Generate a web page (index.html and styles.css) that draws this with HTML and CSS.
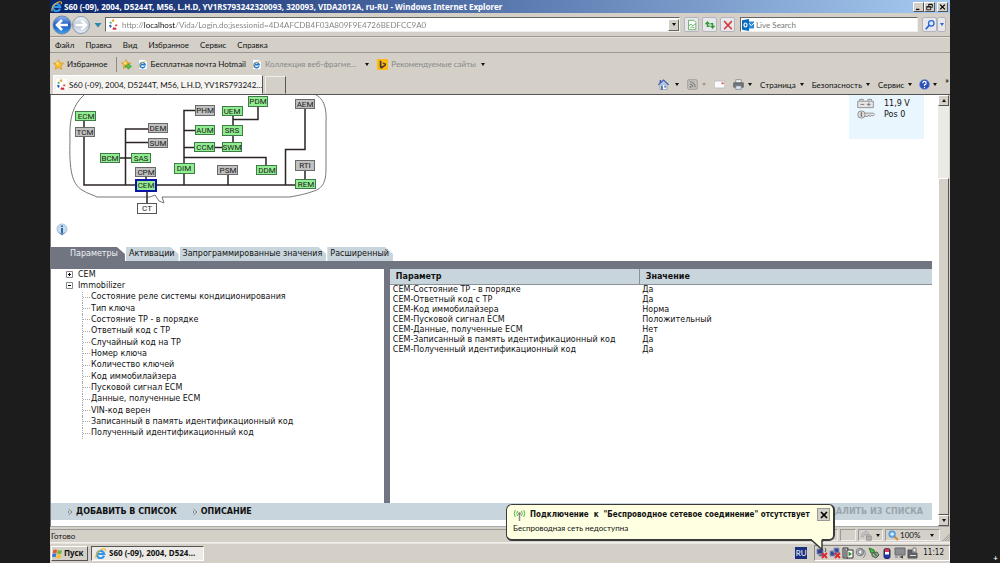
FILE: index.html
```html
<!DOCTYPE html>
<html lang="ru">
<head>
<meta charset="utf-8">
<title>S60 (-09), 2004 - VIDA</title>
<link rel="stylesheet" href="styles.css">
</head>
<body>
<svg class="defs" aria-hidden="true">
  <linearGradient id="gb" x1="0" y1="0" x2="0" y2="1"><stop offset="0" stop-color="#8fb8ee"/><stop offset=".5" stop-color="#1c58c0"/><stop offset="1" stop-color="#3fa4ee"/></linearGradient>
  <linearGradient id="gg" x1="0" y1="0" x2="0" y2="1"><stop offset="0" stop-color="#f4f6fa"/><stop offset=".5" stop-color="#bcc6d6"/><stop offset="1" stop-color="#e6edf6"/></linearGradient>
  <symbol id="ie" viewBox="0 0 16 16"><path d="M13.2 11.2A5.3 5.3 0 1 1 13.4 8.6H4.6" fill="none" stroke="#2f97ea" stroke-width="3"/><path d="M2 15C-1 12 5 2 12.500 1C16 .6 15.500 3 14.600 4.600" fill="none" stroke="#f0b428" stroke-width="1.500"/></symbol>
  <symbol id="iepage" viewBox="0 0 16 16"><path d="M2 .5h9.500l3.500 3.500v11.500H2z" fill="#fff" stroke="#b9bcc4"/><path d="M11.500 10.500A3.700 3.700 0 1 1 11.800 8.300H5" fill="none" stroke="#1f78d0" stroke-width="2.200"/><path d="M3 13C2 10 7 4 12.500 3.500" fill="none" stroke="#f0b428" stroke-width="1.200"/></symbol>
  <symbol id="vida" viewBox="0 0 16 16"><path d="M0 0h16v16H0z" fill="#fff"/><g fill="none" stroke-width="3"><path d="M9 2a6 6 0 0 0-3 1" stroke="#e8a020"/><path d="M4.500 4.500a6 6 0 0 0-1 2" stroke="#3fa860"/><path d="M3 8.500a6 6 0 0 0 1.500 3.500" stroke="#3260c8"/><path d="M7 13.500a6 6 0 0 0 5 .3" stroke="#c83040"/><path d="M12 8v2.500" stroke="#e04038"/></g></symbol>
  <symbol id="star" viewBox="0 0 16 16"><path d="M8 1l2.200 4.700 5.100.6-3.800 3.500 1 5.100L8 12.300l-4.500 2.600 1-5.100L.7 6.300l5.100-.6z" fill="#fbc02c" stroke="#d98c1c"/><path d="M8 3v6l-4-2z" fill="#ffe48a"/></symbol>
</svg>

<main class="window">
  <header class="titlebar">
    <svg class="ic"><use href="#ie"/></svg>
    <h1 class="title">S60 (-09), 2004, D5244T, M56, L.H.D, YV1RS793242320093, 320093, VIDA2012A, ru-RU - Windows Internet Explorer</h1>
    <div class="winbtns">
      <button class="wb" aria-label="Свернуть"><svg viewBox="0 0 10 10"><path d="M2 8h4" stroke="#000" stroke-width="1.600"/></svg></button>
      <button class="wb" aria-label="Восстановить"><svg viewBox="0 0 10 10"><path d="M4 4V1.500h4.500v4H7M1.500 4.500h5v4h-5z M4 2h4.500M1.500 5h5" fill="none" stroke="#000"/></svg></button>
      <button class="wb close" aria-label="Закрыть"><svg viewBox="0 0 10 10"><path d="M2 2l6 6M8 2l-6 6" stroke="#000" stroke-width="1.500"/></svg></button>
    </div>
  </header>

  <div class="navrow">
    <button class="round" aria-label="Назад"><svg viewBox="0 0 20 20"><circle cx="10" cy="10" r="9" fill="url(#gb)" stroke="#6c85a8"/><path d="M16 10H6M10 5l-5 5 5 5" fill="none" stroke="#fff" stroke-width="2.600"/></svg></button>
    <button class="round" aria-label="Вперёд"><svg viewBox="0 0 20 20"><circle cx="10" cy="10" r="8.500" fill="url(#gg)" stroke="#8d99ac"/><path d="M4.500 10h10M10.500 5.500l4.500 4.500-4.500 4.500" fill="none" stroke="#fff" stroke-width="2.400"/></svg></button>
    <button class="recent" aria-label="Последние страницы"><svg viewBox="0 0 8 6"><path d="M.5 1h7L4 5.500z" fill="#2a87b4"/></svg></button>
    <div class="field address">
      <svg class="ic"><use href="#vida"/></svg>
      <input class="url" aria-label="Адрес" value="http://localhost/Vida/Login.do;jsessionid=4D4AFCDB4F03A809F9E4726BEDFCC9A0">
      <button class="drop" aria-label="Список адресов"><i class="arr"></i></button>
    </div>
    <button class="tool" aria-label="Режим совместимости"><svg viewBox="0 0 14 14"><path d="M3 1.500h6l2.500 2.500v8.500H3z" fill="#fff" stroke="#56a858"/><path d="M3 8l3-2 2 2 3.500-2.500M5 10.500l2-1.500 3 1.500" fill="none" stroke="#56a858"/></svg></button>
    <button class="tool" aria-label="Обновить"><svg viewBox="0 0 14 14"><path d="M.8 6L4 2.300 7.200 6z" fill="#2f9a34"/><path d="M4 5v3.500h2.500" fill="none" stroke="#2f9a34" stroke-width="1.600"/><path d="M6.800 8L10 11.700 13.200 8z" fill="#2f9a34"/><path d="M10 9V5.500H7.500" fill="none" stroke="#2f9a34" stroke-width="1.600"/></svg></button>
    <button class="tool" aria-label="Остановить"><svg viewBox="0 0 14 14"><path d="M2.500 2.500l9 9.500M11.500 2.500l-9 9.500" stroke="#d2383a" stroke-width="1.800"/></svg></button>
    <div class="field search">
      <svg class="outlook" viewBox="0 0 12 12"><path d="M6 2.500h6v7H6z" fill="#2c8ad8"/><path d="M6.500 4l3 2.500L12 4" fill="none" stroke="#fff"/><path d="M0 1.200L7 0v12l-7-1.200z" fill="#0a6cbd"/><ellipse cx="3.500" cy="6" rx="1.500" ry="2" fill="none" stroke="#fff" stroke-width="1.200"/></svg>
      <input class="q" aria-label="Поиск" placeholder="Live Search">
    </div>
    <div class="go">
      <button class="tool" aria-label="Искать"><svg viewBox="0 0 14 14"><circle cx="8.500" cy="5" r="3.200" fill="#dcecff" stroke="#2f64d0" stroke-width="1.500"/><path d="M6 7.500L2 12" stroke="#2f64d0" stroke-width="2"/></svg></button>
      <button class="tool thin" aria-label="Параметры поиска"><i class="arr blue"></i></button>
    </div>
  </div>

  <nav class="menubar">
    <button>Файл</button><button>Правка</button><button>Вид</button><button>Избранное</button><button>Сервис</button><button>Справка</button>
  </nav>

  <div class="favbar">
    <button class="fav first"><svg class="ic"><use href="#star"/></svg>Избранное</button>
    <button class="fav add" aria-label="Добавить на панель избранного"><svg class="ic" viewBox="0 0 16 16"><use href="#star" width="15" height="15"/><path d="M6 9h4V6l5.500 4.800L10 15v-3H6z" fill="#56c04a" stroke="#2f8c34" stroke-width=".7"/></svg></button>
    <a class="fav hot" href="#hotmail"><svg class="ic"><use href="#iepage"/></svg>Бесплатная почта Hotmail</a>
    <button class="fav dim coll"><svg class="ic"><use href="#iepage"/></svg>Коллекция веб-фрагме...<i class="arr"></i></button>
    <button class="fav dim"><svg class="ic" viewBox="0 0 16 16"><path d="M0 0h16v16H0z" fill="#fdb813"/><path d="M4 2l2.500 1v8l5-2.700-2.800-1.300-.9-2L13 6.500v3L6.500 14 4 12.500z" fill="#40392c"/></svg>Рекомендуемые сайты<i class="arr"></i></button>
  </div>

  <div class="tabrow">
    <button class="pagetab"><svg class="ic"><use href="#vida"/></svg>S60 (-09), 2004, D5244T, M56, L.H.D, YV1RS793242...</button>
    <button class="newtab" aria-label="Новая вкладка"></button>
    <div class="cmds">
      <button class="cmd" aria-label="Домой"><svg class="ic" viewBox="0 0 16 16"><path d="M3 8h10v7.500H3z" fill="#fff" stroke="#7283a4"/><path d="M.5 8.500L8 1.500l7.500 7" fill="#b8c8e8" stroke="#4560a8" stroke-width="1.800"/><path d="M2.500 1.500h2v4h-2z" fill="#3450c0"/><path d="M4.500 9.500h2.500v6H4.500z" fill="#3a6cb8"/><path d="M9 9.500h3v3H9z" fill="#5d88c0"/></svg><i class="arr"></i></button>
      <button class="cmd" aria-label="Каналы"><svg class="ic" viewBox="0 0 16 16"><rect x="1" y="1" width="14" height="14" rx="2" fill="#c4c2be" stroke="#8d8b87"/><circle cx="5" cy="11.500" r="1.400" fill="#777"/><path d="M4 7.500a4.500 4.500 0 0 1 4.500 4.500M4 4a8 8 0 0 1 8 8" fill="none" stroke="#777" stroke-width="1.500"/></svg><i class="arr pale"></i></button>
      <button class="cmd" aria-label="Почта"><svg class="ic" viewBox="0 0 16 16"><path d="M.5 3h15v10H.5z" fill="#fcfcfc" stroke="#b5b5bb"/><path d="M11 5h3v2.500h-3z" fill="#d04848"/></svg></button>
      <button class="cmd" aria-label="Печать"><svg class="ic" viewBox="0 0 16 16"><path d="M4 1h8v5H4z" fill="#eef2f8" stroke="#777"/><path d="M1 5.500h14V12H1z" fill="#74767a" stroke="#55575c"/><path d="M4 10h8v5H4z" fill="#dceaf4" stroke="#778"/></svg><i class="arr"></i></button>
      <button class="cmd">Страница<i class="arr"></i></button>
      <button class="cmd">Безопасность<i class="arr"></i></button>
      <button class="cmd">Сервис<i class="arr"></i></button>
      <button class="cmd help" aria-label="Справка"><svg class="ic" viewBox="0 0 16 16"><circle cx="8" cy="8" r="7.300" fill="#2c52b8" stroke="#8ba0d4"/><path d="M5.500 6Q5.500 3.500 8 3.500T10.500 6Q10.500 7.500 8 8.500V10M8 11.500v1.800" fill="none" stroke="#fff" stroke-width="1.700"/></svg><i class="arr"></i></button>
      <button class="cmd more">»</button>
    </div>
  </div>

  <section class="viewport">
    <div class="doc">
      <div class="overview">
        <svg class="net" viewBox="51 95 290 128" role="img" aria-label="Схема блоков управления">
          <path d="M84 95C73 105 69 118 70 140C69 170 72 184 82 190C88 194 94 195 97 197H150L155 195L159 201L164 203L162 197H290C300 195 306 194 311 192C322 189 326 184 326 168V122C327 105 322 98 316 95" fill="none" stroke="#777"/>
          <g fill="none" stroke="#2b2323" stroke-width="1.500">
            <path d="M84 120V185H306M125.500 185V129H148M125.500 142.500H148M120 158H131M146 172V185M147 190V205M184 185V110.500H196M184 130.500H196M184 147.500H232M184 157.500H266V165M228 175V185M233 115V147M233 119.500H258V106M305 108V149.500H285.500V185M305 170V180"/>
          </g>
          <g class="g">
            <rect x="75.500" y="111.500" width="20" height="9"/><rect x="100.500" y="153.500" width="19" height="9"/><rect x="131.500" y="153.500" width="19" height="9"/><rect x="195.500" y="125.500" width="19" height="9"/><rect x="194.500" y="142.500" width="20" height="9"/><rect x="174.500" y="163.500" width="20" height="10"/><rect x="222.500" y="106.500" width="20" height="9"/><rect x="248.500" y="96.500" width="19" height="10"/><rect x="222.500" y="125.500" width="20" height="10"/><rect x="222.500" y="142.500" width="19" height="9"/><rect x="256.500" y="165.500" width="20" height="9"/><rect x="295.500" y="179.500" width="20" height="9"/>
          </g>
          <g class="n">
            <rect x="75.500" y="127.500" width="19" height="9"/><rect x="148.500" y="123.500" width="19" height="9"/><rect x="148.500" y="138.500" width="19" height="9"/><rect x="135.500" y="167.500" width="20" height="9"/><rect x="195.500" y="105.500" width="19" height="10"/><rect x="217.500" y="165.500" width="20" height="9"/><rect x="295.500" y="99.500" width="19" height="9"/><rect x="295.500" y="160.500" width="19" height="10"/>
          </g>
          <rect x="136" y="180" width="20" height="11" fill="#90ee90" stroke="#0c14a8" stroke-width="2"/>
          <rect x="137.500" y="203.500" width="19" height="10" fill="#fff" stroke="#555"/>
          <g class="lbl">
            <text x="86" y="119">ECM</text><text x="85" y="135">TCM</text><text x="158" y="131">DEM</text><text x="158" y="146">SUM</text><text x="110" y="161">BCM</text><text x="141" y="161">SAS</text><text x="146" y="175">CPM</text><text x="146" y="188">CEM</text><text x="147" y="211">CT</text><text x="205" y="113">PHM</text><text x="205" y="133">AUM</text><text x="205" y="150">CCM</text><text x="184" y="171">DIM</text><text x="228" y="173">PSM</text><text x="232" y="114">UEM</text><text x="258" y="104">PDM</text><text x="232" y="133">SRS</text><text x="232" y="150">SWM</text><text x="267" y="173">DDM</text><text x="305" y="107">AEM</text><text x="305" y="168">RTI</text><text x="306" y="187">REM</text>
          </g>
        </svg>
        <dl class="vehicle">
          <dt><svg class="vi" viewBox="0 0 20 12"><path d="M1 3.500h17v7H1zM3 3V1.500h4V3M12 3V1.500h4V3" fill="#e4e4e4" stroke="#8c8c8c"/><path d="M4 7h4M11 7h4M13 5v4" stroke="#777"/></svg></dt><dd>11,9 V</dd>
          <dt><svg class="vi" viewBox="0 0 20 12"><path d="M8 4.500h10l1.500 1.500-1.500 1.500h-1l-1-1-1 1.500h-1l-1-1.500-1 1.500H8" fill="#e4e4e4" stroke="#8c8c8c"/><circle cx="5" cy="6" r="4" fill="#ddd" stroke="#8c8c8c"/><path d="M5 3.500v5" stroke="#777" stroke-width="1.500"/></svg></dt><dd>Pos 0</dd>
        </dl>
      </div>
      <div class="inforow"><button class="info" aria-label="Информация"><svg viewBox="0 0 12 12"><circle cx="6" cy="5.500" r="5" fill="#c4dcee" stroke="#a9c2d8"/><path d="M2 8.500q4 2.500 8 0L6 12z" fill="#5b87b4"/><path d="M6 4.500v5M6 2v1.500" stroke="#23569c" stroke-width="1.700"/></svg></button></div>
      <div class="tabs" role="tablist">
        <button class="tab on" role="tab" aria-selected="true">Параметры</button>
        <button class="tab" role="tab">Активации</button>
        <button class="tab" role="tab">Запрограммированные значения</button>
        <button class="tab" role="tab">Расширенный</button>
      </div>
      <div class="panes">
        <div class="left">
          <ul class="tree">
            <li class="root"><button class="tw" aria-label="Развернуть CEM"><svg viewBox="0 0 7 7"><path d="M.5.5h6v6h-6z" fill="#fff" stroke="#888"/><path d="M2 3.500h3M3.500 2v3" stroke="#000"/></svg></button>CEM</li>
            <li class="root"><button class="tw" aria-label="Свернуть Immobilizer"><svg viewBox="0 0 7 7"><path d="M.5.5h6v6h-6z" fill="#fff" stroke="#888"/><path d="M2 3.500h3" stroke="#000"/></svg></button>Immobilizer</li>
            <li class="leaf">Состояние реле системы кондиционирования</li>
            <li class="leaf">Тип ключа</li>
            <li class="leaf">Состояние TP - в порядке</li>
            <li class="leaf">Ответный код с TP</li>
            <li class="leaf">Случайный код на TP</li>
            <li class="leaf">Номер ключа</li>
            <li class="leaf">Количество ключей</li>
            <li class="leaf">Код иммобилайзера</li>
            <li class="leaf">Пусковой сигнал ECM</li>
            <li class="leaf">Данные, полученные ECM</li>
            <li class="leaf">VIN-код верен</li>
            <li class="leaf">Записанный в память идентификационный код</li>
            <li class="leaf">Полученный идентификационный код</li>
          </ul>
        </div>
        <div class="right">
          <table class="params">
            <thead><tr><th>Параметр</th><th>Значение</th></tr></thead>
            <tbody>
              <tr><td>CEM-Состояние TP - в порядке</td><td>Да</td></tr>
              <tr><td>CEM-Ответный код с TP</td><td>Да</td></tr>
              <tr><td>CEM-Код иммобилайзера</td><td>Норма</td></tr>
              <tr><td>CEM-Пусковой сигнал ECM</td><td>Положительный</td></tr>
              <tr><td>CEM-Данные, полученные ECM</td><td>Нет</td></tr>
              <tr><td>CEM-Записанный в память идентификационный код</td><td>Да</td></tr>
              <tr><td>CEM-Полученный идентификационный код</td><td>Да</td></tr>
            </tbody>
          </table>
        </div>
      </div>
      <div class="actions">
        <button class="act"><svg viewBox="0 0 5 8"><path d="M.5 1L4 4 .5 7M.5 3v2" fill="none" stroke="#7d868e"/></svg>ДОБАВИТЬ В СПИСОК</button>
        <button class="act"><svg viewBox="0 0 5 8"><path d="M.5 1L4 4 .5 7M.5 3v2" fill="none" stroke="#7d868e"/></svg>ОПИСАНИЕ</button>
        <button class="act off" disabled>УДАЛИТЬ ИЗ СПИСКА</button>
      </div>
    </div>
    <div class="scroll">
      <button class="sb" aria-label="Вверх"><i class="arr up"></i></button>
      <div class="thumb"></div>
      <button class="sb" aria-label="Вниз"><i class="arr"></i></button>
    </div>
  </section>

  <div class="status">
    <span class="ready">Готово</span>
    <i class="cell"></i><i class="cell"></i><i class="cell"></i><i class="cell"></i>
    <button class="cell lock" aria-label="Фильтрация"><svg class="ic" viewBox="0 0 16 16"><path d="M1 10Q1 3 7 3V1l4 3.500L7 8V6Q4 6 3.500 10z" fill="#c8c8cc" stroke="#99999f"/><path d="M8 9h7v6H8z" fill="#b0b0b0" stroke="#888"/><path d="M9.500 9V7.500q2-3 4 0V9" fill="none" stroke="#888"/></svg><i class="arr"></i></button>
    <button class="cell zoom"><svg class="ic" viewBox="0 0 16 16"><path d="M9 9l5.500 5.500" stroke="#d08a3c" stroke-width="3"/><circle cx="6" cy="6" r="4.800" fill="#64b0f0" stroke="#3f82c8"/><path d="M3.500 6h5M6 3.500v5" stroke="#fff" stroke-width="1.500"/></svg>100%<i class="arr"></i></button>
    <svg class="grip" viewBox="0 0 10 10"><path d="M1 10l9-9M4 10l6-6M7 10l3-3" stroke="#86837d"/></svg>
  </div>

  <footer class="taskbar">
    <button class="start"><svg class="ic" viewBox="0 0 16 16"><path d="M2 3q3-2 5.500 0L6.500 7.500Q4 6 1 7.500z" fill="#e8542c"/><path d="M8.500 3q3 1.500 6 0L13.500 8q-3 1.500-6 0z" fill="#6cb43c"/><path d="M.8 8.500q3-1.500 5.500 0L5.200 13.500q-2.500-1.500-5 0z" fill="#3c70d8"/><path d="M7.300 9q3 1.500 6 0l-1 5q-3 1.500-6 0z" fill="#f8c020"/></svg>Пуск</button>
    <button class="task"><svg class="ic"><use href="#ie"/></svg>S60 (-09), 2004, D524...</button>
    <span class="lang">RU</span>
    <div class="tray">
      <svg class="ti" viewBox="0 0 12 12"><path d="M1 2h6v5H1zM3 7h5v2H3z" fill="#2a3f92" stroke="#8890ac"/><path d="M9 1q2 2 0 4" fill="none" stroke="#555"/><path d="M6 6l5 5M11 6l-5 5" stroke="#e0282c" stroke-width="1.800"/></svg>
      <svg class="ti" viewBox="0 0 12 12"><path d="M1 4h5v5H1zM5 1h5v5H5z" fill="#344aa0" stroke="#9298b4"/><path d="M6 6l5 5M11 6l-5 5" stroke="#e0282c" stroke-width="1.800"/></svg>
      <svg class="ti" viewBox="0 0 12 12"><path d="M1 1h5v10H1z" fill="#d8d8d8" stroke="#333"/><path d="M5 3h6v8H5z" fill="#fff" stroke="#333"/><path d="M6.500 4.500l3.500 2.500-3.500 2.500z" fill="#2c8a38"/><path d="M3 2v8" stroke="#333"/></svg>
      <svg class="ti" viewBox="0 0 12 12"><circle cx="5" cy="5" r="3.800" fill="#c8ccd4" stroke="#777d88"/><path d="M3 4l4-2v6L3 6z" fill="#eee" stroke="#777"/><path d="M9 3q3 4-1 8" fill="none" stroke="#889"/></svg>
      <svg class="ti" viewBox="0 0 12 12"><path d="M1 1l5 2 1 4-4-1z" fill="#48b848" stroke="#287a2c"/><path d="M4 6l5-1 2 3-3 3-4-2z" fill="#9fa4a0" stroke="#555"/><path d="M6 6l3 3" stroke="#2c9438" stroke-width="1.500"/></svg>
      <svg class="ti" viewBox="0 0 12 12"><rect x="3" y="1.500" width="6" height="10" rx="2" fill="#2038b0" stroke="#202860"/><path d="M4 1.500h4v3.500H4z" fill="#e03a3a"/><path d="M4 5h4v2.500H4z" fill="#fff"/></svg>
      <svg class="ti" viewBox="0 0 12 12"><path d="M1 1h10v7H1z" fill="#8b8e90" stroke="#66696c"/><path d="M5 10l4-1.500v3z" fill="#444"/><path d="M1 10h3" stroke="#777"/></svg>
      <svg class="ti" viewBox="0 0 12 12"><path d="M1 3h4v3h5v5H1z" fill="#606468" stroke="#505458"/><path d="M6 1h3v4H6z" fill="#f0f0f0" stroke="#777"/><path d="M3 8.500h6" stroke="#ddd"/></svg>
      <time class="clock">11:12</time>
      <aside class="balloon" role="status">
        <div class="bhead">
          <svg class="ant" viewBox="0 0 12 12"><path d="M6 5v7" stroke="#888" stroke-width="1.500"/><circle cx="6" cy="4.500" r="1.200" fill="#777"/><path d="M4 2q-1.500 2.500 0 5M8 2q1.500 2.500 0 5M1.800 1q-2.200 3.500 0 7M10.200 1q2.200 3.500 0 7" fill="none" stroke="#4fb848"/></svg>
          <strong>Подключение&nbsp; к&nbsp; "Беспроводное сетевое соединение" отсутствует</strong>
          <button class="bx" aria-label="Закрыть сообщение"><svg viewBox="0 0 10 10"><path d="M2 2l6 6M8 2l-6 6" stroke="#000" stroke-width="1.700"/></svg></button>
        </div>
        <p class="btext">Беспроводная сеть недоступна</p>
        <svg class="tail" viewBox="0 0 14 12"><path d="M1 0v1.500L11 10V0z" fill="#ffffe1"/><path d="M0 1.500h1L11 10.500V1.500h2" fill="none" stroke="#3a3a3a" stroke-width="1.500"/></svg>
      </aside>
    </div>
  </footer>
</main>
<span class="plus">+</span>
</body>
</html>
```
FILE: styles.css
```css
* { box-sizing: border-box; }
body {
  margin: 0;
  padding: 0 5%;
  height: 100vh;
  background: #1c1c1c;
  color: #111;
  font: 8px/10px Lato, "Liberation Sans", sans-serif;
  position: relative;
  overflow: hidden;
}
button, input { font: inherit; color: inherit; margin: 0; padding: 0; border: 0; background: none; }
button { display: flex; align-items: center; white-space: nowrap; }
svg { display: block; flex: none; }
ul, dl, dd, p, h1 { margin: 0; padding: 0; }
.defs { position: absolute; width: 0; height: 0; }
.ic { width: 11px; height: 11px; }
.arr { width: 0; height: 0; border: 2px solid transparent; border-top: 3px solid #111; border-bottom: 0; }
.arr.up { border-top: 0; border-bottom: 3px solid #111; }
.arr.blue { border-top-color: #2f64d0; }
.arr.pale { border-top-color: #999; }

.window { height: 100%; display: flex; flex-direction: column; background: #d4d0c8; }

.titlebar {
  display: flex; align-items: center; gap: 2px; height: 13px; padding: 0 2px 0 1px;
  background: linear-gradient(to right, #0a246a, #a6caf0);
  color: #fff;
}
.title { flex: 1; font: bold 8px/12px "Noto Sans", "DejaVu Sans", sans-serif; white-space: nowrap; }
.winbtns { display: flex; }
.wb { width: 11px; height: 10px; background: #d4d0c8; border: 1px solid; border-color: #fff #555 #555 #fff; }
.wb svg { width: 9px; height: 8px; }
.wb.close { margin-left: 2px; }

.navrow { display: flex; align-items: center; height: 24px; padding: 0 4px 0 2px; border-bottom: 1px solid #9c9890; }
.round svg { width: 20px; height: 20px; }
.round + .round { margin-left: -1px; }
.recent { padding: 0 3px 0 3px; }
.recent svg { width: 8px; height: 6px; }
.field { display: flex; align-items: center; height: 15px; background: #fff; border: 1px solid; border-color: #666 #eee #eee #666; }
.address { flex: 1; padding-left: 2px; }
.url {
  flex: 1; min-width: 0; margin-left: 3px; color: transparent;
  background: linear-gradient(to right, #808080 22px, #111 22px 54px, #808080 54px);
  -webkit-background-clip: text; background-clip: text;
}
.drop { width: 11px; height: 12px; justify-content: center; background: #d4d0c8; border: 1px solid; border-color: #fff #666 #666 #fff; }
.tool {
  width: 15px; height: 15px; margin-left: 3px; justify-content: center;
  background: #e8e8ec; border: 1px solid #b4b4bc; border-radius: 2px;
}
.tool svg { width: 12px; height: 12px; }
.address + .tool { margin-left: 4px; }
.search { width: 178px; margin-left: 5px; padding-left: 1px; }
.outlook { width: 12px; height: 12px; }
.q { flex: 1; min-width: 0; margin-left: 2px; }
.q::placeholder { color: #777; opacity: 1; }
.go { display: flex; margin-left: 1px; }
.thin { width: 9px; margin-left: 0; }

.menubar { display: flex; align-items: center; gap: 11px; height: 16px; padding-left: 5px; border-bottom: 1px solid #9c9890; border-top: 1px solid #e4e1da; }

.favbar { display: flex; align-items: center; height: 22px; padding-left: 3px; }
.fav { display: flex; align-items: center; gap: 3px; color: inherit; text-decoration: none; white-space: nowrap; }
.first { padding-right: 8px; border-right: 1px solid #8e8b84; height: 15px; }
.add { margin-left: 4px; }
.hot { margin-left: 5px; }
.coll { margin: 0 8px 0 5px; }
.dim { color: #888; }
.fav .arr { margin-left: 2px; }
.coll .arr { margin-left: 6px; }

.tabrow { display: flex; align-items: flex-end; height: 20px; padding: 0 1px 0 3px; border-bottom: 1px solid #555; }
.pagetab { height: 19px; width: 210px; gap: 2px; padding: 0 2px; background: #f5f4f1; border: 1px solid; border-color: #fff #555 transparent #fff; }
.newtab { width: 21px; height: 18px; margin-left: 2px; border: 1px solid; border-color: #eee #555 transparent #eee; }
.cmds { flex: 1; align-self: stretch; display: flex; align-items: center; justify-content: flex-end; gap: 8px; }
.cmd { gap: 4px; }
.cmd:first-child { gap: 6px; }
.help { margin-left: -1px; }
.help .arr { margin-left: -1px; }
.more { align-self: flex-start; font-weight: bold; }

.viewport { flex: 1; min-height: 0; display: flex; border-left: 1px solid #777; border-bottom: 1px solid #aaa; background: #fff; }
.doc { flex: 1; min-width: 0; display: flex; flex-direction: column; padding: 0 6px 6px 0; }
.overview { display: flex; align-items: flex-start; justify-content: space-between; height: 128px; }
.net { width: 290px; height: 128px; }
.net .g rect { fill: #90ee90; stroke: #3f7a48; }
.net .n rect { fill: #c0c0c0; stroke: #6a6a6a; }
.lbl { font: 8px Roboto, "Liberation Sans", sans-serif; text-anchor: middle; fill: #1c1c1c; }
.vehicle {
  display: grid; grid-template-columns: 28px 1fr; grid-auto-rows: 11px; align-items: center;
  width: 75px; height: 44px; margin-right: 8px; padding: 3px 0 0 7px; background: #e9f6fd;
  font: 8px/11px "DejaVu Sans", Verdana, sans-serif;
}
.vi { width: 20px; height: 11px; }
.inforow { height: 24px; padding-left: 5px; }
.info svg { width: 12px; height: 13px; }

.tabs { display: flex; align-items: flex-end; gap: 1px; font: 8px/14px "DejaVu Sans", Verdana, sans-serif; }
.tab { height: 14px; padding: 0 4px 0 3px; background: #c9d5dc; clip-path: polygon(0 0, calc(100% - 8px) 0, 100% 7px, 100% 100%, 0 100%); }
.tab.on { padding: 0 7px 0 19px; background: #717582; color: #eef0f4; }
.panes { flex: 1; min-height: 0; display: grid; grid-template-columns: 5fr 8fr; border-top: 8px solid #717582; font: 8px/10px "DejaVu Sans", Verdana, sans-serif; }
.left { border-right: 6px solid #717582; }
.tree { list-style: none; display: grid; grid-auto-rows: 1fr; height: 170px; padding-left: 15px; }
.tree li { display: flex; align-items: center; white-space: nowrap; }
.tw { width: 7px; margin-right: 5px; }
.tw svg { width: 7px; height: 7px; }
.leaf { margin-left: 16px; border-left: 1px dotted #aaa; }
.leaf::before { content: ""; width: 7px; margin-right: 1px; border-top: 1px dotted #aaa; }
.params { width: 100%; border-collapse: collapse; }
.params th { height: 15px; padding: 1px 6px 0; text-align: left; background: #c9d5dc; border-bottom: 1px solid #8a9298; }
.params th + th { border-left: 1px solid #8a9298; }
.params th:first-child { width: 46%; }
.params td { height: 10px; padding: 0 3px; }

.actions { display: flex; align-items: center; gap: 16px; height: 17px; padding: 0 9px 0 17px; background: #c9d5dc; font: bold 8px/10px "DejaVu Sans", Verdana, sans-serif; }
.act { gap: 3px; }
.act svg { width: 5px; height: 8px; }
.off { margin-left: auto; color: #9aa4aa; }

.scroll { width: 12px; display: flex; flex-direction: column; background: #eceae6; border-right: 1px solid #d4d0c8; }
.sb { height: 11px; justify-content: center; background: #d4d0c8; border: 1px solid; border-color: #fff #555 #555 #fff; }
.thumb { flex: 1; margin-top: 72px; background: #d4d0c8; border: 1px solid; border-color: #fff #555 #555 #fff; }

.status { display: flex; align-items: stretch; height: 16px; padding: 2px 0 1px; border-bottom: 1px solid #f2f0ec; gap: 2px; }
.ready { flex: 1; padding-left: 1px; line-height: 12px; border-top: 1px solid #999; }
.cell { width: 16px; border: 1px solid; border-color: #999 #eee #eee #999; }
.lock { width: 25px; gap: 4px; padding-left: 2px; }
.zoom { width: 55px; padding-left: 2px; gap: 1px; }
.zoom .arr { margin-left: 9px; }
.grip { width: 8px; align-self: flex-end; }

.taskbar { display: flex; align-items: center; height: 20px; padding: 0 0 1px 1px; border-top: 1px solid #e8e5de; }
.start, .task { height: 15px; font: bold 8px/10px "Noto Sans", "DejaVu Sans", sans-serif; border: 1px solid; border-color: #fff #555 #555 #fff; }
.start { width: 37px; gap: 1px; }
.task { width: 113px; margin-left: 3px; padding-left: 3px; gap: 3px; background: #eceae6; border-color: #555 #fff #fff #555; }
.lang { margin-left: auto; padding: 1px 0; width: 12px; text-align: center; background: #1a2f80; color: #fff; }
.tray { position: relative; display: flex; align-items: center; height: 16px; margin-left: 7px; padding: 0 5px 0 1px; gap: 1px; border: 1px solid; border-color: #888 #fff #fff #888; }
.ti { width: 12px; height: 12px; }
.clock { margin-left: 3px; font: 8px/10px "DejaVu Sans Condensed", "DejaVu Sans", sans-serif; }
.balloon {
  position: absolute; right: 114px; bottom: 19px; width: 329px; height: 37px;
  padding: 1px 3px 0 6px; background: #ffffe1; border: 2px solid #3a3a3a; border-width: 1px 2px 2px 1px; border-radius: 6px;
  white-space: nowrap;
}
.bhead { display: flex; align-items: center; gap: 4px; font: bold 8px/17px "DejaVu Sans Condensed", "DejaVu Sans", sans-serif; }
.ant { width: 13px; height: 12px; }
.bx { width: 13px; height: 13px; margin-left: auto; justify-content: center; background: #d4d0c8; border: 1px solid #999; }
.bx svg { width: 10px; height: 10px; }
.tail { position: absolute; right: 8px; top: 34px; width: 14px; height: 12px; }

.plus { position: absolute; right: 2px; bottom: 0; color: #fff; font-weight: bold; }
```
